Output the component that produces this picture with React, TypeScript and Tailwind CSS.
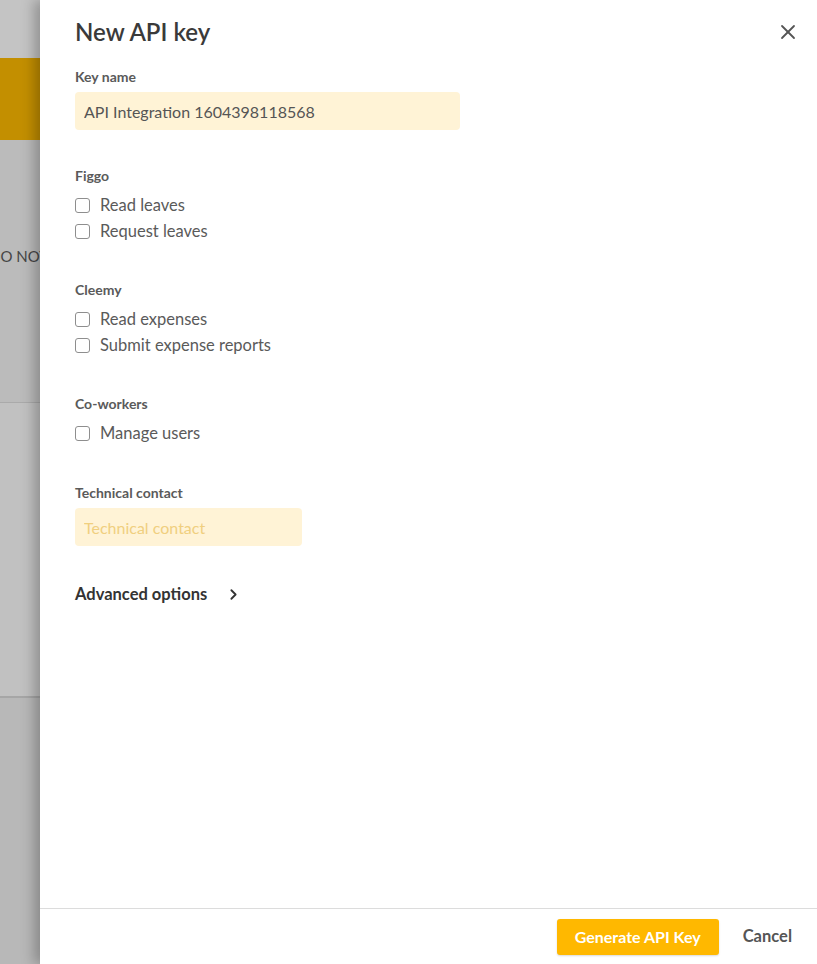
import React, { useState } from 'react';
import { X, ChevronRight } from 'lucide-react';

interface Scope {
  app: string;
  rights: string[];
}

const scopes: Scope[] = [
  { app: 'Figgo', rights: ['Read leaves', 'Request leaves'] },
  { app: 'Cleemy', rights: ['Read expenses', 'Submit expense reports'] },
  { app: 'Co-workers', rights: ['Manage users'] },
];

const Checkbox: React.FC<{ label: string }> = ({ label }) => {
  const [checked, setChecked] = useState(false);
  return (
    <label className="flex h-[26px] items-center cursor-pointer">
      <span
        onClick={() => setChecked(!checked)}
        className={`h-[15px] w-[15px] rounded-[3px] border-[1.5px] border-[#8e8e8e] ${checked ? 'bg-[#ffb800]' : 'bg-white'}`}
      />
      <span className="ml-[10px] text-[16.5px] text-[#5a5a5a]">{label}</span>
    </label>
  );
};

const App: React.FC = () => {
  const [keyName, setKeyName] = useState('API Integration 1604398118568');
  const [contact, setContact] = useState('');

  return (
    <div className="flex h-[964px] w-[817px] overflow-hidden font-['Lato',sans-serif]">
      {/* dimmed page behind the drawer */}
      <div className="flex w-[40px] shrink-0 flex-col overflow-hidden">
        <div className="h-[58px] bg-[#c4c4c4]" />
        <div className="h-[82px] bg-[#c38f00]" />
        <div className="flex h-[262px] items-center bg-[#bbbbbb] pb-[30px]">
          <span className="ml-[-11px] whitespace-nowrap text-[15px] text-[#464646]">DO NOT</span>
        </div>
        <div className="h-[294px] border-t border-[#aaaaaa] bg-[#c1c1c1]" />
        <div className="flex-1 border-t-2 border-[#a6a6a6] bg-[#b8b8b8]" />
      </div>

      <div className="relative z-10 flex flex-1 flex-col bg-white shadow-[-6px_0_12px_rgba(0,0,0,0.25)]">
        <div className="flex-1 pl-[35px] pr-[17px] pt-[16px]">
          <div className="flex items-center justify-between">
            <h1 className="text-[24px] font-semibold leading-[32px] text-[#3a3a3a]">New API key</h1>
            <X className="h-[24px] w-[24px] text-[#555]" strokeWidth={1.8} />
          </div>

          <div className="mt-[20px] text-[14px] font-bold leading-[18px] text-[#5a5a5a]">Key name</div>
          <input
            value={keyName}
            onChange={(e) => setKeyName(e.target.value)}
            className="mt-[6px] h-[38px] w-[385px] rounded-[4px] bg-[#fff3d6] px-[9px] text-[16px] text-[#555] outline-none"
          />

          {scopes.map((scope) => (
            <div key={scope.app} className="mt-[37px]">
              <div className="text-[14px] font-bold leading-[18px] text-[#5a5a5a]">{scope.app}</div>
              <div className="mt-[7px] flex flex-col">
                {scope.rights.map((r) => (
                  <Checkbox key={r} label={r} />
                ))}
              </div>
            </div>
          ))}

          <div className="mt-[38px] text-[14px] font-bold leading-[18px] text-[#5a5a5a]">Technical contact</div>
          <input
            value={contact}
            onChange={(e) => setContact(e.target.value)}
            placeholder="Technical contact"
            className="mt-[6px] h-[38px] w-[227px] rounded-[4px] bg-[#fff3d6] px-[9px] text-[16px] text-[#555] outline-none placeholder:text-[#f0cf7f]"
          />

          <button className="mt-[38px] flex h-[20px] items-center text-[16.5px] font-bold text-[#333]">
            Advanced options
            <ChevronRight className="ml-[18px] h-[17px] w-[17px]" strokeWidth={2.6} />
          </button>
        </div>

        <div className="flex h-[56px] items-center justify-end border-t border-[#dcdcdc] pr-[25px]">
          <button className="h-[36px] w-[162px] rounded-[3px] bg-[#ffb800] text-[16px] font-bold text-white shadow-[0_1px_2px_rgba(0,0,0,0.15)]">
            Generate API Key
          </button>
          <button className="ml-[24px] text-[16.5px] font-bold text-[#555]">Cancel</button>
        </div>
      </div>
    </div>
  );
};

export default App;
